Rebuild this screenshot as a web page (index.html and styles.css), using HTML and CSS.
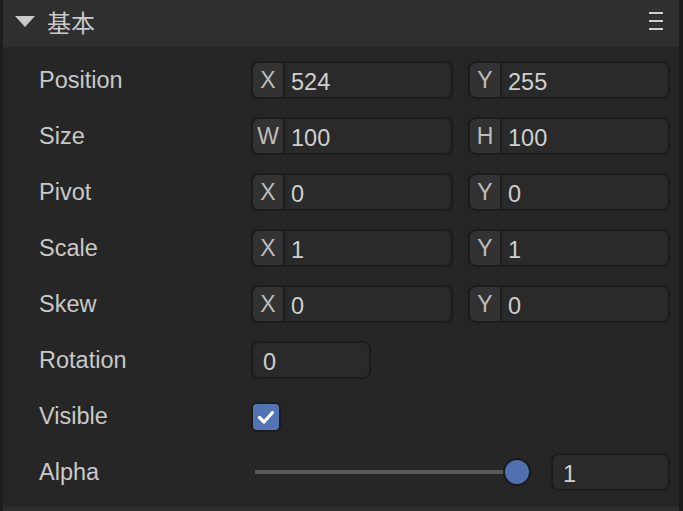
FILE: index.html
```html
<!DOCTYPE html>
<html>
<head>
<meta charset="utf-8">
<link rel="stylesheet" href="styles.css">
</head>
<body>
<div class="panel">
  <div class="header">
    <span class="caret"></span>
    <span class="title">基本</span>
    <span class="menu"><i></i><i></i><i></i></span>
  </div>
  <div class="rows">
    <div class="row">
      <div class="label">Position</div>
      <div class="pair">
        <div class="field"><span class="pre">X</span><span class="val">524</span></div>
        <div class="field"><span class="pre">Y</span><span class="val">255</span></div>
      </div>
    </div>
    <div class="row">
      <div class="label">Size</div>
      <div class="pair">
        <div class="field"><span class="pre">W</span><span class="val">100</span></div>
        <div class="field"><span class="pre">H</span><span class="val">100</span></div>
      </div>
    </div>
    <div class="row">
      <div class="label">Pivot</div>
      <div class="pair">
        <div class="field"><span class="pre">X</span><span class="val">0</span></div>
        <div class="field"><span class="pre">Y</span><span class="val">0</span></div>
      </div>
    </div>
    <div class="row">
      <div class="label">Scale</div>
      <div class="pair">
        <div class="field"><span class="pre">X</span><span class="val">1</span></div>
        <div class="field"><span class="pre">Y</span><span class="val">1</span></div>
      </div>
    </div>
    <div class="row">
      <div class="label">Skew</div>
      <div class="pair">
        <div class="field"><span class="pre">X</span><span class="val">0</span></div>
        <div class="field"><span class="pre">Y</span><span class="val">0</span></div>
      </div>
    </div>
    <div class="row">
      <div class="label">Rotation</div>
      <div class="single">
        <div class="field short"><span class="val plain">0</span></div>
      </div>
    </div>
    <div class="row">
      <div class="label">Visible</div>
      <div class="single">
        <div class="check">
          <svg width="22" height="22" viewBox="0 0 22 22"><path d="M4.5 11.5 L9 16 L17.5 6.5" fill="none" stroke="#ffffff" stroke-width="3.2" stroke-linecap="round" stroke-linejoin="round"/></svg>
        </div>
      </div>
    </div>
    <div class="row">
      <div class="label">Alpha</div>
      <div class="slider-row">
        <div class="slider"><div class="track"></div><div class="thumb"></div></div>
        <div class="field alpha"><span class="val plain">1</span></div>
      </div>
    </div>
  </div>
  <div class="foot"></div>
</div>
</body>
</html>
```
FILE: styles.css
```css
html, body {
  margin: 0;
  padding: 0;
  background: #262626;
}
body {
  width: 683px;
  height: 511px;
  overflow: hidden;
  font-family: "Liberation Sans", Arial, sans-serif;
  color: #c9c9c9;
}
.panel {
  width: 683px;
  height: 511px;
  box-sizing: border-box;
  border-left: 3px solid #1c1c1c;
  border-right: 4px solid #1c1c1c;
  background: #262626;
  display: flex;
  flex-direction: column;
}
.header {
  height: 47px;
  flex: none;
  background: #2f2f2f;
  display: flex;
  align-items: center;
  padding-left: 12px;
  padding-right: 16px;
}
.caret {
  width: 0;
  height: 0;
  border-left: 10px solid transparent;
  border-right: 10px solid transparent;
  border-top: 11px solid #c9c9c9;
  margin-top: -4px;
}
.title {
  font-family: "Noto Sans CJK SC", sans-serif;
  font-size: 24px;
  line-height: 30px;
  margin-left: 12px;
  margin-top: -3px;
  color: #c9c9c9;
}
.menu {
  margin-left: auto;
  width: 14px;
  display: flex;
  flex-direction: column;
  gap: 6px;
  margin-top: -6px;
}
.menu i {
  display: block;
  height: 2px;
  background: #d0d0d0;
}
.rows {
  flex: 1;
  padding-top: 14px;
  display: flex;
  flex-direction: column;
  gap: 18px;
}
.row {
  display: flex;
  align-items: center;
  height: 38px;
}
.label {
  width: 248px;
  box-sizing: border-box;
  padding-left: 36px;
  font-size: 23.5px;
  margin-top: 1px;
}
.pair {
  display: flex;
  gap: 15px;
}
.field {
  width: 202px;
  height: 38px;
  box-sizing: border-box;
  border: 2px solid #1c1c1c;
  border-radius: 8px;
  background: #2a2a2a;
  display: flex;
  align-items: stretch;
  overflow: hidden;
  font-size: 23.5px;
}
.pre {
  width: 30px;
  background: #323232;
  border-right: 2px solid #1c1c1c;
  display: flex;
  align-items: center;
  justify-content: center;
  color: #bdbdbd;
  font-size: 23px;
  padding-top: 1px;
}
.val {
  display: flex;
  align-items: center;
  padding-left: 6px;
  padding-top: 4px;
  color: #cfcfcf;
}
.val.plain {
  padding-left: 10px;
}
.field.short {
  width: 120px;
}
.check {
  width: 30px;
  height: 30px;
  box-sizing: border-box;
  border: 2px solid #1c1c1c;
  border-radius: 6px;
  background: #5273b4;
  display: flex;
  align-items: center;
  justify-content: center;
  margin-top: 2px;
}
.slider-row {
  display: flex;
  align-items: center;
  gap: 10px;
}
.slider {
  width: 290px;
  height: 38px;
  position: relative;
  display: flex;
  align-items: center;
}
.track {
  margin-left: 4px;
  width: 252px;
  height: 4px;
  background: #595959;
}
.thumb {
  position: absolute;
  left: 252px;
  top: 5px;
  width: 24px;
  height: 24px;
  border-radius: 50%;
  background: #5070b2;
  border: 2px solid #1a1a1a;
}
.field.alpha {
  width: 119px;
}
.foot {
  height: 4px;
  flex: none;
  background: #2f2f2f;
}
```
